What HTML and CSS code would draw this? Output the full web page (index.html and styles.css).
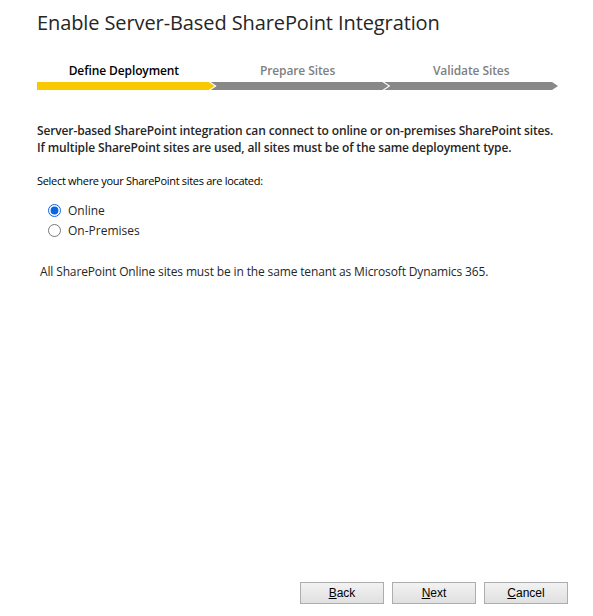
FILE: index.html
```html
<!DOCTYPE html>
<html lang="en">
<head>
  <meta charset="UTF-8">
  <title>Enable Server-Based SharePoint Integration</title>
  <link rel="stylesheet" href="styles.css">
</head>
<body>

<div class="page">
  <h1 class="title">Enable Server-Based SharePoint Integration</h1>

  <div class="steps">
    <div class="step active">
      <span class="step-label">Define Deployment</span>
      <span class="step-bar"></span>
    </div>
    <div class="step">
      <span class="step-label">Prepare Sites</span>
      <span class="step-bar"></span>
    </div>
    <div class="step last">
      <span class="step-label">Validate Sites</span>
      <span class="step-bar"></span>
    </div>
  </div>

  <p class="intro">
    Server-based SharePoint integration can connect to online or on-premises SharePoint sites.<br>
    If multiple SharePoint sites are used, all sites must be of the same deployment type.
  </p>

  <p class="prompt">Select where your SharePoint sites are located:</p>

  <div class="options">
    <label class="option"><input type="radio" name="deploy" checked> Online</label>
    <label class="option"><input type="radio" name="deploy"> On-Premises</label>
  </div>

  <p class="note">All SharePoint Online sites must be in the same tenant as Microsoft Dynamics 365.</p>

  <div class="footer">
    <button class="btn"><u>B</u>ack</button>
    <button class="btn"><u>N</u>ext</button>
    <button class="btn"><u>C</u>ancel</button>
  </div>
</div>

</body>
</html>
```

FILE: styles.css
```css
body {
  margin: 0;
  font-family: "Open Sans", "Noto Sans", sans-serif;
  color: #262626;
  background: #fff;
}
.page {
  height: 100vh;
  box-sizing: border-box;
  padding: 10px 25px 12px 37px;
  display: flex;
  flex-direction: column;
}
.title {
  margin: 0;
  font-size: 20px;
  font-weight: 400;
  letter-spacing: -0.1px;
  color: #262626;
  line-height: 26px;
}
.steps {
  display: flex;
  margin-top: 27px;
  width: 521px;
}
.step {
  flex: 1;
  display: flex;
  flex-direction: column;
  align-items: center;
}
.step-label {
  font-size: 12px;
  font-weight: 600;
  letter-spacing: -0.1px;
  color: #808080;
  line-height: 16px;
  margin-bottom: 3px;
}
.step.active .step-label {
  color: #000;
}
.step-bar {
  align-self: stretch;
  height: 8px;
  background: #888;
  clip-path: polygon(0 0, calc(100% - 6px) 0, 100% 50%, calc(100% - 6px) 100%, 0 100%, 6px 50%);
  margin-right: -4px;
}
.step.active .step-bar {
  background: #f8c800;
  clip-path: polygon(0 0, calc(100% - 6px) 0, 100% 50%, calc(100% - 6px) 100%, 0 100%);
}
.step.last .step-bar {
  margin-right: 0;
}
.intro {
  margin: 32px 0 0;
  font-size: 12px;
  font-weight: 600;
  letter-spacing: -0.13px;
  line-height: 17px;
  color: #262626;
}
.prompt {
  margin: 17px 0 0;
  font-size: 11px;
  letter-spacing: -0.3px;
  color: #000;
}
.options {
  margin-top: 14px;
  padding-left: 11px;
  display: flex;
  flex-direction: column;
  gap: 3px;
}
.option {
  font-size: 12px;
  display: flex;
  align-items: center;
  gap: 7px;
  line-height: 17px;
}
.option input {
  margin: 0;
  width: 13px;
  height: 13px;
  accent-color: #0a64e0;
}
.note {
  margin: 24px 0 0 3px;
  font-size: 12px;
  letter-spacing: -0.14px;
  color: #262626;
}
.footer {
  margin-top: auto;
  display: flex;
  justify-content: flex-end;
  gap: 8px;
}
.btn {
  width: 84px;
  height: 22px;
  font-family: "Liberation Sans", Arial, sans-serif;
  font-size: 12px;
  color: #000;
  border: 1px solid #adadad;
  background: linear-gradient(#f2f2f2, #e0e0e0);
  padding: 0;
}
```
